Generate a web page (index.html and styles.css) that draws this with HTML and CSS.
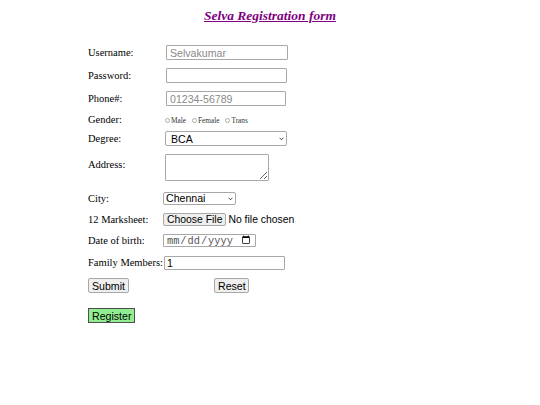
FILE: index.html
```html
<!DOCTYPE html>
<html lang="en">
<head>
<meta charset="utf-8">
<title>Selva Registration form</title>
<link rel="stylesheet" href="styles.css">
</head>
<body>
<h1 class="title">Selva Registration form</h1>
<form class="form">
  <div class="row">
    <label class="label">Username:</label>
    <input class="field field-user" type="text" placeholder="Selvakumar">
  </div>
  <div class="row">
    <label class="label">Password:</label>
    <input class="field field-pass" type="password">
  </div>
  <div class="row">
    <label class="label">Phone#:</label>
    <input class="field field-phone" type="text" placeholder="01234-56789">
  </div>
  <div class="row row-gender">
    <label class="label">Gender:</label>
    <span class="radios">
      <input class="radio" type="radio" name="g"><span class="rtext">Male</span>
      <input class="radio" type="radio" name="g"><span class="rtext">Female</span>
      <input class="radio" type="radio" name="g"><span class="rtext">Trans</span>
    </span>
  </div>
  <div class="row">
    <label class="label">Degree:</label>
    <span class="select-wrap wrap-degree">
      <select class="select select-degree"><option>BCA</option><option>BSc</option><option>BE</option></select>
      <svg class="chev" width="5" height="4" viewBox="0 0 5 4"><path d="M0.6 0.8 L2.5 2.8 L4.4 0.8" fill="none" stroke="#333" stroke-width="0.9"/></svg>
    </span>
  </div>
  <div class="row row-top">
    <label class="label label-top">Address:</label>
    <textarea class="area"></textarea>
  </div>
  <div class="row row-city">
    <label class="label">City:</label>
    <span class="select-wrap">
      <select class="select select-city"><option>Chennai</option><option>Madurai</option></select>
      <svg class="chev" width="5" height="4" viewBox="0 0 5 4"><path d="M0.6 0.8 L2.5 2.8 L4.4 0.8" fill="none" stroke="#333" stroke-width="0.9"/></svg>
    </span>
  </div>
  <div class="row">
    <label class="label">12 Marksheet:</label>
    <input class="file" type="file">
  </div>
  <div class="row">
    <label class="label">Date of birth:</label>
    <input class="date" type="date">
  </div>
  <div class="row row-family">
    <label class="label">Family Members:</label>
    <input class="field field-family" type="text" value="1">
  </div>
  <div class="row buttons">
    <button class="btn btn-submit" type="submit">Submit</button>
    <button class="btn btn-reset" type="reset">Reset</button>
  </div>
  <div class="row row-register">
    <button class="btn btn-register" type="button">Register</button>
  </div>
</form>
</body>
</html>
```
FILE: styles.css
```css
html, body {
  margin: 0;
  padding: 0;
  background: #ffffff;
}
body {
  font-family: "Liberation Serif", "Times New Roman", serif;
  font-size: 10.5px;
  color: #000;
}
.title {
  margin: 0;
  padding-top: 8px;
  text-align: center;
  font-size: 13.5px;
  line-height: 15px;
  font-weight: bold;
  font-style: italic;
  text-decoration: underline;
  color: #800080;
}
.form {
  display: flex;
  flex-direction: column;
  gap: 8px;
  padding: 22px 0 0 88px;
}
.row {
  display: flex;
  align-items: center;
}
.row-top { align-items: flex-start; }
.label {
  width: 75px;
  flex: none;
  white-space: nowrap;
  line-height: 12px;
}
.label-top { margin-top: 5px; }
.field {
  box-sizing: border-box;
  height: 15px;
  border: 1px solid #a8a8a8;
  border-radius: 1px;
  padding: 0 3px;
  font-family: "Liberation Sans", Arial, sans-serif;
  font-size: 10.6px;
  color: #000;
  outline: none;
}
.field::placeholder { color: #8a8a8a; }
.field-user { width: 122px; margin-left: 3px; }
.field-pass { width: 121px; margin-left: 3px; }
.field-phone { width: 120px; margin-left: 3px; }
.field-family { width: 121px; margin-left: 1px; height: 14px; padding-left: 2px; }
.row-gender { height: 10px; margin-top: 1px; margin-bottom: -2px; }
.radios {
  display: flex;
  align-items: center;
  margin-left: 2px;
  font-size: 7.3px;
  color: #333;
}
.radio {
  width: 5px;
  height: 5px;
  margin: 0 1px 0 0;
  opacity: 0.6;
}
.rtext { margin-right: 6px; }
.select-wrap {
  position: relative;
  display: inline-flex;
}
.wrap-degree { margin-left: 2px; }
.select {
  box-sizing: border-box;
  appearance: none;
  -webkit-appearance: none;
  font-family: "Liberation Sans", Arial, sans-serif;
  font-size: 10.6px;
  border: 1px solid #a8a8a8;
  border-radius: 2px;
  background: #fff;
  color: #000;
  padding: 0;
  margin: 0;
}
.select-degree { width: 122px; height: 15px; padding-left: 5px; }
.select-city { width: 73px; height: 13px; padding-left: 2px; line-height: 11px; }
.chev {
  position: absolute;
  right: 3px;
  top: 50%;
  margin-top: -2px;
  pointer-events: none;
}
.row-city { margin-top: 3px; }
.area {
  box-sizing: border-box;
  width: 104px;
  height: 27px;
  margin: 0 0 0 2px;
  border: 1px solid #a8a8a8;
  border-radius: 1px;
}
.file {
  font-family: "Liberation Sans", Arial, sans-serif;
  font-size: 10.4px;
  height: 13px;
  line-height: 13px;
}
.file::file-selector-button {
  box-sizing: border-box;
  height: 13px;
  font-family: "Liberation Sans", Arial, sans-serif;
  font-size: 10.4px;
  padding: 0 3px;
  margin: 0 2px 0 0;
  border: 1px solid #a8a8a8;
  border-radius: 2px;
  background: #efefef;
}
.date {
  box-sizing: border-box;
  width: 93px;
  height: 13px;
  border: 1px solid #a8a8a8;
  border-radius: 1px;
  padding: 0 2px;
  font-family: "Liberation Mono", "Courier New", monospace;
  font-size: 10.3px;
  color: #555;
}
.row-family { margin-top: 1px; }
.buttons { gap: 85px; }
.btn {
  box-sizing: border-box;
  height: 15px;
  padding: 0 3px;
  font-family: "Liberation Sans", Arial, sans-serif;
  font-size: 10.6px;
  border: 1px solid #a8a8a8;
  border-radius: 2px;
  background: #efefef;
  color: #000;
}
.btn-submit { width: 41px; }
.btn-reset { width: 35px; }
.row-register { margin-top: 7px; }
.btn-register {
  width: 47px;
  background: #90ee90;
  border: 1px solid #4f4f4f;
  border-radius: 0;
}
```
